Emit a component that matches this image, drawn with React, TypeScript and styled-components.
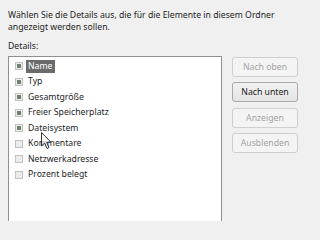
import { createGlobalStyle, styled } from 'styled-components'

const GlobalStyle = createGlobalStyle`
  html, body {
    margin: 0;
    padding: 0;
    background: #f0f0f0;
  }
  body {
    font-family: 'Noto Sans', 'Open Sans', sans-serif;
    font-size: 8.7px;
    color: #1e1e1e;
  }
`

const Page = styled.div`
  width: 300px;
  height: 221px;
  overflow: hidden;
  box-sizing: border-box;
  padding: 10px 0 0 8px;
`

const Intro = styled.p`
  margin: 0;
  line-height: 11.5px;
`

const FieldLabel = styled.div`
  margin-top: 8px;
  line-height: 11.5px;
`

const Body = styled.div`
  display: flex;
  margin-top: 3px;
  gap: 10px;
`

const ListBox = styled.div`
  position: relative;
  flex: none;
  width: 214px;
  height: 200px;
  box-sizing: border-box;
  border: 1px solid #8f9090;
  background: #fff;
  padding-top: 2px;
`

const Row = styled.div`
  display: flex;
  align-items: center;
  height: 15.5px;
  padding-left: 6px;
`

const Check = styled.span<{ $checked: boolean }>`
  flex: none;
  position: relative;
  width: 8px;
  height: 8px;
  box-sizing: border-box;
  border: 1px solid #c2c2c2;
  background: #ececec;
  margin-right: 5px;

  &::after {
    content: '';
    display: ${({ $checked }) => ($checked ? 'block' : 'none')};
    position: absolute;
    left: 1px;
    top: 1px;
    width: 4px;
    height: 4px;
    background: #6e806e;
  }
`

const ItemText = styled.span<{ $selected?: boolean }>`
  line-height: 13px;
  padding: 0 2px;
  margin-left: -2px;
  background: ${({ $selected }) => ($selected ? '#6b6b6b' : 'transparent')};
  color: ${({ $selected }) => ($selected ? '#fff' : '#1e1e1e')};
`

const ButtonColumn = styled.div`
  display: flex;
  flex-direction: column;
  gap: 5.5px;
  margin-top: 1px;
`

const Button = styled.button<{ $disabled?: boolean }>`
  width: 66px;
  height: 20px;
  padding: 0;
  font: inherit;
  border-radius: 3px;
  border: 1px solid ${({ $disabled }) => ($disabled ? '#cfcfcf' : '#a9a9a9')};
  background: ${({ $disabled }) =>
    $disabled ? '#f4f4f4' : 'linear-gradient(#f2f2f2, #e4e4e4)'};
  color: ${({ $disabled }) => ($disabled ? '#a3a3a3' : '#1a1a1a')};
`

const Cursor = styled.svg`
  position: absolute;
  left: 32px;
  top: 75px;
`

const items = [
  { name: 'Name', checked: true },
  { name: 'Typ', checked: true },
  { name: 'Gesamtgröße', checked: true },
  { name: 'Freier Speicherplatz', checked: true },
  { name: 'Dateisystem', checked: true },
  { name: 'Kommentare', checked: false },
  { name: 'Netzwerkadresse', checked: false },
  { name: 'Prozent belegt', checked: false },
]

const App = () => {
  return (
    <Page>
      <GlobalStyle />
      <Intro>
        Wählen Sie die Details aus, die für die Elemente in diesem Ordner
        <br />
        angezeigt werden sollen.
      </Intro>
      <FieldLabel>Details:</FieldLabel>
      <Body>
        <ListBox>
          {items.map((item, i) => (
            <Row key={item.name}>
              <Check $checked={item.checked} />
              <ItemText $selected={i === 0}>{item.name}</ItemText>
            </Row>
          ))}
          <Cursor width="12" height="18" viewBox="0 0 12 18">
            <path
              d="M0.5 0.5 L0.5 14 L3.6 11 L6 16.5 L8 15.6 L5.7 10.3 L10 10.3 Z"
              fill="#fff"
              fillOpacity="0.7"
              stroke="#333"
              strokeWidth="1"
              strokeLinejoin="round"
            />
          </Cursor>
        </ListBox>
        <ButtonColumn>
          <Button $disabled>Nach oben</Button>
          <Button>Nach unten</Button>
          <Button $disabled>Anzeigen</Button>
          <Button $disabled>Ausblenden</Button>
        </ButtonColumn>
      </Body>
    </Page>
  )
}

export default App
